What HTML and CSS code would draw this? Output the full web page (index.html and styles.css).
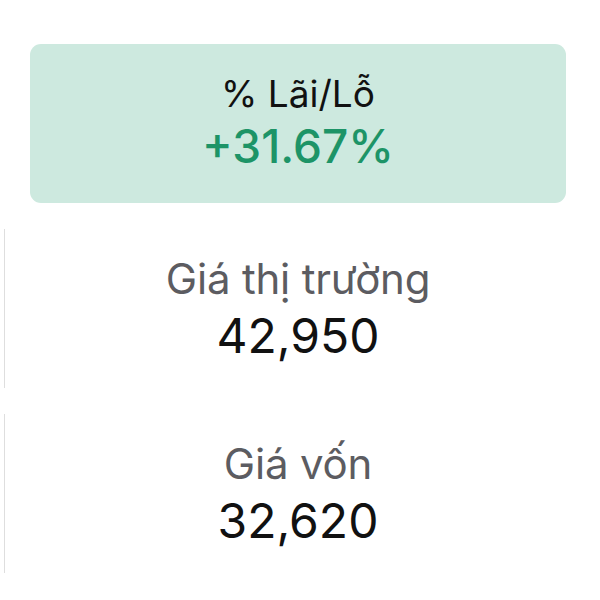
FILE: index.html
```html
<!DOCTYPE html>
<html lang="vi">
<head>
<meta charset="utf-8">
<link rel="stylesheet" href="styles.css">
</head>
<body>
<div class="list">
  <div class="item card">
    <div class="label dark">% Lãi/Lỗ</div>
    <div class="value green">+31.67%</div>
  </div>
  <div class="item plain">
    <div class="label">Giá thị trường</div>
    <div class="value">42,950</div>
  </div>
  <div class="item plain">
    <div class="label">Giá vốn</div>
    <div class="value">32,620</div>
  </div>
</div>
</body>
</html>
```
FILE: styles.css
```css
html, body {
  margin: 0;
  padding: 0;
  background: #ffffff;
}
body {
  font-family: Inter, "Noto Sans", sans-serif;
  width: 600px;
  height: 600px;
  overflow: hidden;
}
.list {
  display: flex;
  flex-direction: column;
  gap: 26px;
  padding: 44px 34px 0 4px;
}
.item {
  height: 159px;
  display: flex;
  flex-direction: column;
  align-items: center;
  justify-content: center;
  box-sizing: border-box;
}
.card {
  margin-left: 26px;
  background: #cde9df;
  border-radius: 11px;
  padding-bottom: 4px;
}
.plain {
  border-left: 1px solid #dedede;
  padding-left: 25px;
}
.label {
  font-size: 42px;
  line-height: 54px;
  color: #5c5c61;
  letter-spacing: -0.2px;
}
.label.dark {
  color: #111111;
  font-size: 37px;
  line-height: 48px;
  letter-spacing: 0;
}
.value {
  font-size: 48px;
  line-height: 60px;
  color: #111111;
}
.value.green {
  color: #1d9467;
  font-size: 46px;
  line-height: 56px;
  font-weight: 500;
}
```
